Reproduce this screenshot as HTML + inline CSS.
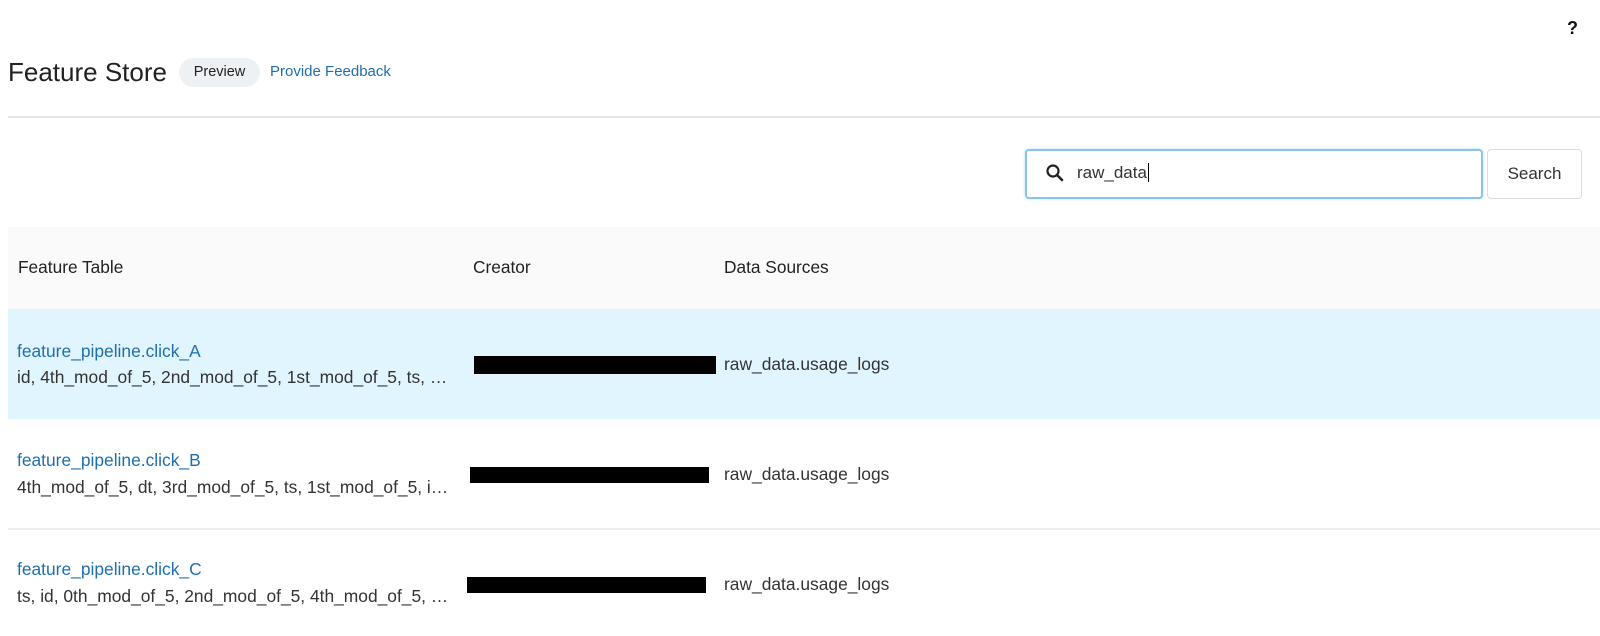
<!DOCTYPE html>
<html><head><style>
body{margin:0;width:1600px;height:636px;background:#fff;font-family:"Liberation Sans",sans-serif;position:relative;overflow:hidden;color:#333}
.a{position:absolute;white-space:nowrap;line-height:1}
.link{color:#1f6fae}
.hdr{font-size:17.3px;color:#222}
.t{font-size:17.4px}
.s{font-size:17.4px;color:#333}
.blk{position:absolute;background:#000}
</style></head><body>
<div class="a" style="left:1567px;top:19px;font-size:18px;font-weight:bold;color:#111">?</div>
<div class="a" style="left:8px;top:59px;font-size:26px;color:#222">Feature Store</div>
<div class="a" style="left:179px;top:58px;width:81px;height:29px;border-radius:15px;background:#eef1f4;font-size:14.5px;line-height:29px;text-align:center;color:#222">Preview</div>
<div class="a link" style="left:270px;top:64px;font-size:15px">Provide Feedback</div>
<div class="a" style="left:8px;top:116px;width:1602px;height:2px;background:#e6e6e6"></div>
<div class="a" style="left:1025px;top:149px;width:454px;height:46px;border:2px solid #8cc3ea;border-radius:4px;box-shadow:0 0 3px #bde0f7"></div>
<svg class="a" style="left:1045px;top:163px" width="20" height="20" viewBox="0 0 20 20"><circle cx="8" cy="8" r="5.5" fill="none" stroke="#222" stroke-width="2.2"/><line x1="12" y1="12" x2="17" y2="17" stroke="#222" stroke-width="2.6" stroke-linecap="round"/></svg>
<div class="a" style="left:1077px;top:164px;font-size:17px;color:#333">raw_data<span style="border-left:1px solid #000;margin-left:1px"></span></div>
<div class="a" style="left:1487px;top:149px;width:93px;height:48px;border:1px solid #ddd;border-radius:4px;font-size:17px;line-height:48px;text-align:center;color:#333">Search</div>
<div class="a" style="left:8px;top:227px;width:1592px;height:82px;background:#fafafa;border-bottom:1px solid #eee"></div>
<div class="a hdr" style="left:18px;top:259px">Feature Table</div>
<div class="a hdr" style="left:473px;top:259px">Creator</div>
<div class="a hdr" style="left:724px;top:259px">Data Sources</div>
<div class="a" style="left:8px;top:310px;width:1592px;height:109px;background:#e1f5fe"></div>
<div class="a" style="left:8px;top:528px;width:1592px;height:2px;background:#eee"></div>
<div class="a t link" style="left:17px;top:343px">feature_pipeline.click_A</div>
<div class="a s" style="left:17px;top:369px">id, 4th_mod_of_5, 2nd_mod_of_5, 1st_mod_of_5, ts, …</div>
<div class="blk" style="left:474px;top:356px;width:242px;height:18px"></div>
<div class="a t" style="left:724px;top:356px">raw_data.usage_logs</div>
<div class="a t link" style="left:17px;top:452px">feature_pipeline.click_B</div>
<div class="a s" style="left:17px;top:479px">4th_mod_of_5, dt, 3rd_mod_of_5, ts, 1st_mod_of_5, i…</div>
<div class="blk" style="left:470px;top:467px;width:239px;height:16px"></div>
<div class="a t" style="left:724px;top:466px">raw_data.usage_logs</div>
<div class="a t link" style="left:17px;top:561px">feature_pipeline.click_C</div>
<div class="a s" style="left:17px;top:588px">ts, id, 0th_mod_of_5, 2nd_mod_of_5, 4th_mod_of_5, …</div>
<div class="blk" style="left:467px;top:577px;width:239px;height:16px"></div>
<div class="a t" style="left:724px;top:576px">raw_data.usage_logs</div>
</body></html>
